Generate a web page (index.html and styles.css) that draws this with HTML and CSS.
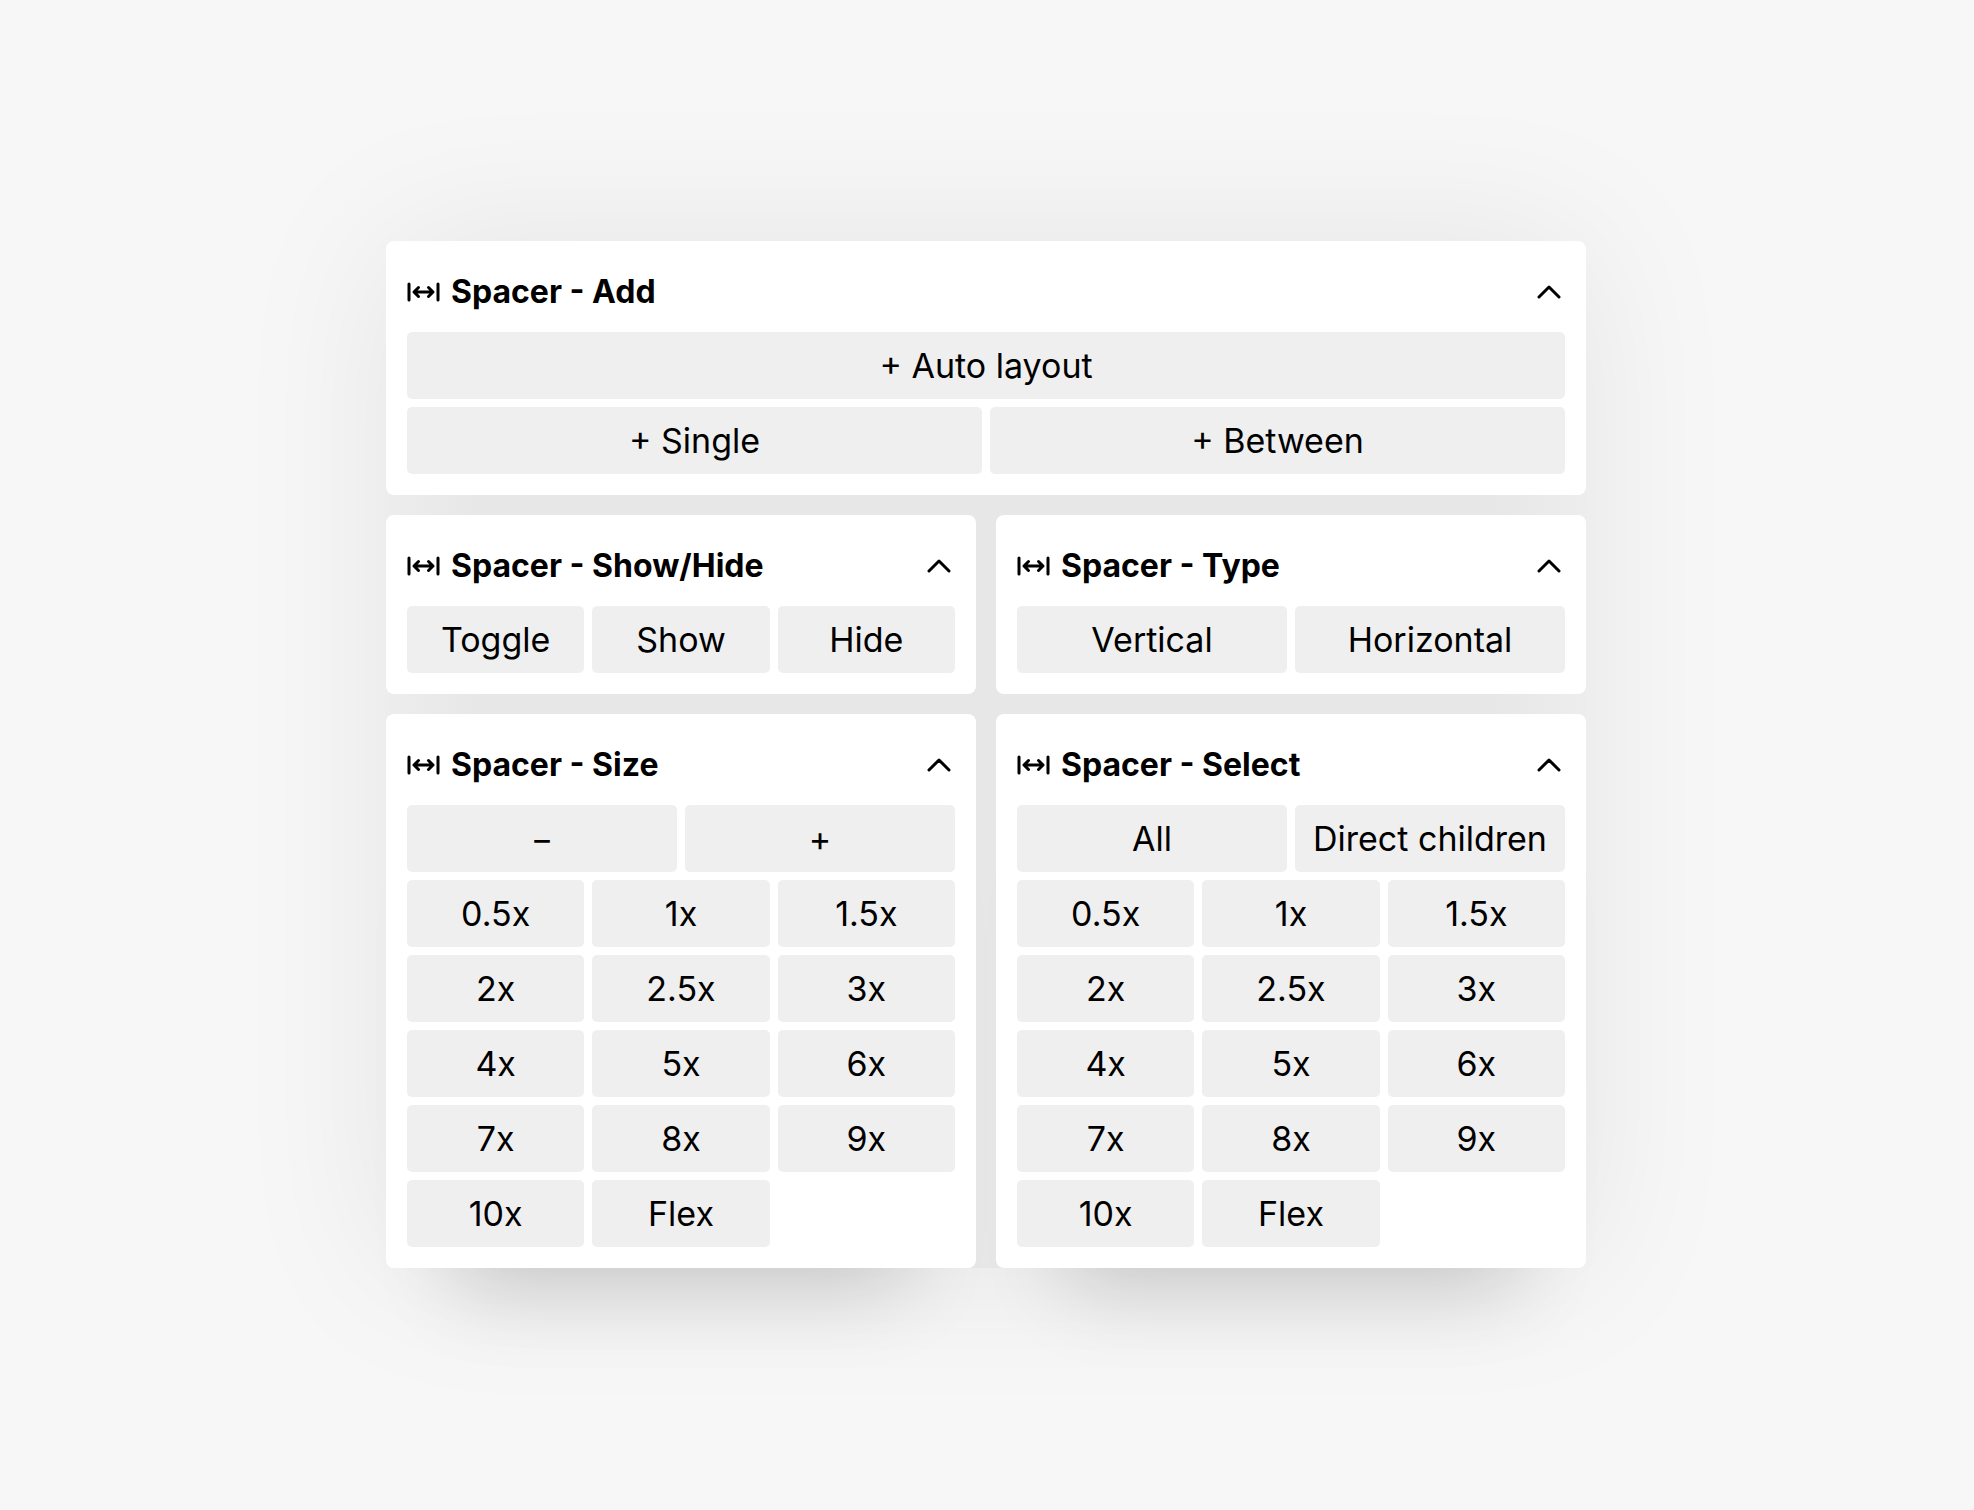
FILE: index.html
```
<!DOCTYPE html>
<html lang="en">
<head>
    <meta charset="UTF-8">
    <meta name="viewport" content="width=device-width, initial-scale=1.0">
    <title>Spacer</title>
    <link rel="stylesheet" href="styles.css">
</head>
<body>
    <!-- Shared icons -->
    <svg class="icon-defs" aria-hidden="true">
        <symbol id="icon-spacer" viewBox="0 0 34 20">
            <path d="M2 2v16M31 2v16M7 10h19M11.5 5.5L7 10l4.5 4.5M21.5 5.5L26 10l-4.5 4.5"/>
        </symbol>
        <symbol id="icon-chevron" viewBox="0 0 24 14">
            <path d="M2 12L12 2l10 10"/>
        </symbol>
    </svg>

    <main class="panels">
        <!-- Add -->
        <section class="panel panel-wide">
            <header class="panel-header">
                <svg class="icon-spacer" aria-hidden="true"><use href="#icon-spacer"/></svg>
                <h2 class="panel-title">Spacer - Add</h2>
                <button class="collapse-btn" aria-label="Collapse Add"><svg class="icon-chevron"><use href="#icon-chevron"/></svg></button>
            </header>
            <div class="btn-grid">
                <button class="btn btn-full">+ Auto layout</button>
                <button class="btn btn-half">+ Single</button>
                <button class="btn btn-half">+ Between</button>
            </div>
        </section>

        <!-- Show/Hide -->
        <section class="panel">
            <header class="panel-header">
                <svg class="icon-spacer" aria-hidden="true"><use href="#icon-spacer"/></svg>
                <h2 class="panel-title">Spacer - Show/Hide</h2>
                <button class="collapse-btn" aria-label="Collapse Show/Hide"><svg class="icon-chevron"><use href="#icon-chevron"/></svg></button>
            </header>
            <div class="btn-grid">
                <button class="btn">Toggle</button>
                <button class="btn">Show</button>
                <button class="btn">Hide</button>
            </div>
        </section>

        <!-- Type -->
        <section class="panel">
            <header class="panel-header">
                <svg class="icon-spacer" aria-hidden="true"><use href="#icon-spacer"/></svg>
                <h2 class="panel-title">Spacer - Type</h2>
                <button class="collapse-btn" aria-label="Collapse Type"><svg class="icon-chevron"><use href="#icon-chevron"/></svg></button>
            </header>
            <div class="btn-grid">
                <button class="btn btn-half">Vertical</button>
                <button class="btn btn-half">Horizontal</button>
            </div>
        </section>

        <!-- Size -->
        <section class="panel panel-raised">
            <header class="panel-header">
                <svg class="icon-spacer" aria-hidden="true"><use href="#icon-spacer"/></svg>
                <h2 class="panel-title">Spacer - Size</h2>
                <button class="collapse-btn" aria-label="Collapse Size"><svg class="icon-chevron"><use href="#icon-chevron"/></svg></button>
            </header>
            <div class="btn-grid">
                <button class="btn btn-half">−</button>
                <button class="btn btn-half">+</button>
                <button class="btn">0.5x</button>
                <button class="btn">1x</button>
                <button class="btn">1.5x</button>
                <button class="btn">2x</button>
                <button class="btn">2.5x</button>
                <button class="btn">3x</button>
                <button class="btn">4x</button>
                <button class="btn">5x</button>
                <button class="btn">6x</button>
                <button class="btn">7x</button>
                <button class="btn">8x</button>
                <button class="btn">9x</button>
                <button class="btn">10x</button>
                <button class="btn">Flex</button>
            </div>
        </section>

        <!-- Select -->
        <section class="panel panel-raised">
            <header class="panel-header">
                <svg class="icon-spacer" aria-hidden="true"><use href="#icon-spacer"/></svg>
                <h2 class="panel-title">Spacer - Select</h2>
                <button class="collapse-btn" aria-label="Collapse Select"><svg class="icon-chevron"><use href="#icon-chevron"/></svg></button>
            </header>
            <div class="btn-grid">
                <button class="btn btn-half">All</button>
                <button class="btn btn-half">Direct children</button>
                <button class="btn">0.5x</button>
                <button class="btn">1x</button>
                <button class="btn">1.5x</button>
                <button class="btn">2x</button>
                <button class="btn">2.5x</button>
                <button class="btn">3x</button>
                <button class="btn">4x</button>
                <button class="btn">5x</button>
                <button class="btn">6x</button>
                <button class="btn">7x</button>
                <button class="btn">8x</button>
                <button class="btn">9x</button>
                <button class="btn">10x</button>
                <button class="btn">Flex</button>
            </div>
        </section>
    </main>
</body>
</html>
```
FILE: styles.css
```
* {
    margin: 0;
    padding: 0;
    box-sizing: border-box;
}

body {
    min-height: 100vh;
    display: flex;
    justify-content: center;
    align-items: center;
    padding: 20px 22px 22px 20px;
    font-family: Inter, sans-serif;
    background-color: #f7f7f7;
    color: #000;
}

.icon-defs {
    display: none;
}

/* Panels */
.panels {
    width: 100%;
    max-width: 1200px;
    display: grid;
    grid-template-columns: 1fr 1fr;
    gap: 20px;
    border-radius: 8px;
    background: linear-gradient(to right, #ededed, #e7e7e7 8%, #e7e7e7 92%, #ededed);
    box-shadow: 0 0 160px rgba(0, 0, 0, 0.08);
}

.panel {
    background-color: #fff;
    border-radius: 8px;
    padding: 21px;
}

.panel-wide {
    grid-column: 1 / -1;
}

.panel-raised {
    box-shadow: 0 90px 80px -70px rgba(0, 0, 0, 0.16);
}

.panel-header {
    display: flex;
    align-items: center;
    gap: 10px;
    height: 60px;
    margin-bottom: 10px;
}

.panel-title {
    flex: 1;
    font-size: 32px;
    font-weight: 700;
    line-height: 40px;
}

.collapse-btn {
    display: flex;
    padding: 4px;
    border: none;
    background: none;
    cursor: pointer;
}

/* Icons */
.icon-spacer,
.icon-chevron {
    fill: none;
    stroke: #000;
    stroke-width: 3;
    stroke-linecap: round;
    stroke-linejoin: round;
}

.icon-spacer {
    width: 34px;
    height: 20px;
}

.icon-chevron {
    width: 24px;
    height: 14px;
}

/* Buttons */
.btn-grid {
    display: grid;
    grid-template-columns: repeat(6, 1fr);
    gap: 8px;
}

.btn {
    grid-column: span 2;
    height: 67px;
    border: none;
    border-radius: 5px;
    background-color: #efefef;
    color: #000;
    font-family: inherit;
    font-size: 34px;
    white-space: nowrap;
    cursor: pointer;
}

.btn-half {
    grid-column: span 3;
}

.btn-full {
    grid-column: 1 / -1;
}

.btn:hover {
    background-color: #e6e6e6;
}

/* Responsive Design */
@media (max-width: 900px) {
    .panels {
        grid-template-columns: 1fr;
    }
}
```
